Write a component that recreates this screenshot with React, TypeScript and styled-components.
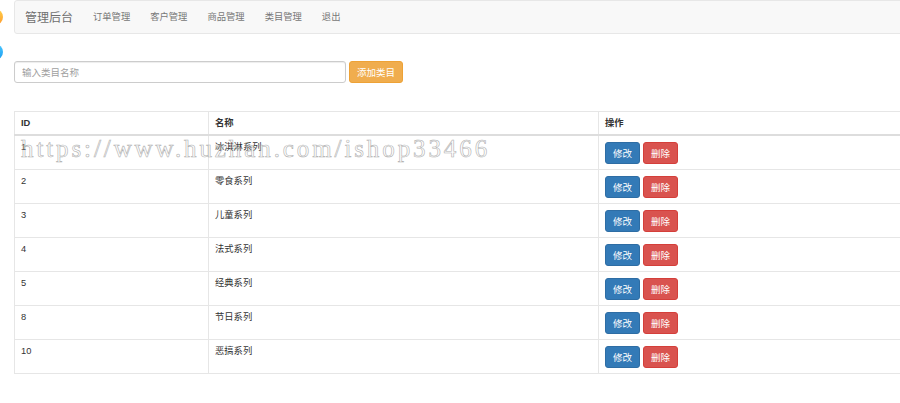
import React from "react";
import styled, { createGlobalStyle } from "styled-components";

const GlobalStyle = createGlobalStyle`
  html, body {
    margin: 0;
    padding: 0;
    background: #fff;
    overflow: hidden;
  }
  body {
    font-family: "Liberation Sans", "Noto Sans CJK SC", sans-serif;
    font-size: 9.3px;
    line-height: 1.42857;
    color: #333;
  }
`;

const categories = [
  { id: 1, name: "冰淇淋系列" },
  { id: 2, name: "零食系列" },
  { id: 3, name: "儿童系列" },
  { id: 4, name: "法式系列" },
  { id: 5, name: "经典系列" },
  { id: 8, name: "节日系列" },
  { id: 10, name: "恶搞系列" },
];

const links = ["订单管理", "客户管理", "商品管理", "类目管理", "退出"];

function App() {
  return (
    <Page>
      <GlobalStyle />
      <SideDot color="linear-gradient(#ffd24a, #ff9a2e)" top={9} />
      <SideDot color="linear-gradient(#4cc8ff, #1a9cf0)" top={44} />
      <Container>
        <Navbar>
          <Brand>管理后台</Brand>
          {links.map((l) => (
            <NavLink key={l}>{l}</NavLink>
          ))}
        </Navbar>

        <AddForm>
          <NameInput placeholder="输入类目名称" />
          <Button variant="warning">添加类目</Button>
        </AddForm>

        <Table>
          <colgroup>
            <col style={{ width: 194 }} />
            <col style={{ width: 390 }} />
            <col />
          </colgroup>
          <thead>
            <tr>
              <Th>ID</Th>
              <Th>名称</Th>
              <Th>操作</Th>
            </tr>
          </thead>
          <tbody>
            {categories.map((c) => (
              <tr key={c.id}>
                <Td>{c.id}</Td>
                <Td>{c.name}</Td>
                <Td>
                  <Actions>
                    <Button variant="primary">修改</Button>
                    <Button variant="danger">删除</Button>
                  </Actions>
                </Td>
              </tr>
            ))}
          </tbody>
        </Table>
      </Container>
      <Watermark>https://www.huzhan.com/ishop33466</Watermark>
    </Page>
  );
}

const Page = styled.div`
  position: relative;
  width: 900px;
  height: 403px;
  overflow: hidden;
`;

const SideDot = styled.div<{ color: string; top: number }>`
  position: absolute;
  left: -13px;
  top: ${(p) => p.top}px;
  width: 16px;
  height: 16px;
  border-radius: 50%;
  background: ${(p) => p.color};
`;

const Container = styled.div`
  width: 960px;
  padding-left: 14px;
  display: flex;
  flex-direction: column;
`;

const Navbar = styled.nav`
  display: flex;
  align-items: center;
  height: 34px;
  background: #f8f8f8;
  border: 1px solid #e7e7e7;
  border-radius: 3px;
  box-sizing: border-box;
`;

const Brand = styled.a`
  padding: 0 10px;
  font-size: 12px;
  color: #6f6f6f;
  font-family: "Noto Sans CJK SC", sans-serif;
`;

const NavLink = styled.a`
  padding: 0 10px;
  font-size: 9.3px;
  color: #777;
  font-family: "Noto Sans CJK SC", sans-serif;
`;

const AddForm = styled.div`
  display: flex;
  align-items: center;
  gap: 3px;
  margin-top: 27px;
`;

const NameInput = styled.input`
  width: 332px;
  height: 22px;
  box-sizing: border-box;
  border: 1px solid #ccc;
  border-radius: 3px;
  padding: 0 7px;
  font-size: 9.5px;
  font-family: "Noto Sans CJK SC", sans-serif;
  box-shadow: inset 0 1px 1px rgba(0, 0, 0, 0.075);
  outline: none;
  &::placeholder {
    color: #a0a0a0;
  }
`;

const colors = {
  primary: { bg: "#337ab7", border: "#2e6da4" },
  danger: { bg: "#d9534f", border: "#d43f3a" },
  warning: { bg: "#f0ad4e", border: "#eea236" },
};

const Button = styled.button<{ variant: keyof typeof colors }>`
  height: 22px;
  box-sizing: border-box;
  padding: 0 7px;
  border: 1px solid ${(p) => colors[p.variant].border};
  background: ${(p) => colors[p.variant].bg};
  color: #fff;
  border-radius: 3px;
  font-size: 9.5px;
  font-family: "Noto Sans CJK SC", sans-serif;
  line-height: 20px;
  cursor: pointer;
`;

const Table = styled.table`
  margin-top: 28px;
  width: 100%;
  table-layout: fixed;
  border-collapse: collapse;
  border-spacing: 0;
  border: 1px solid #e6e6e6;
`;

const Th = styled.th`
  text-align: left;
  font-weight: bold;
  padding: 5px 6px 4px 6px;
  height: 13px;
  line-height: 13px;
  border: 1px solid #e6e6e6;
  border-bottom: 2px solid #dddddd;
  font-family: "Liberation Sans", "Noto Sans CJK SC", sans-serif;
  color: #333;
`;

const Td = styled.td`
  vertical-align: top;
  padding: 5px 6px 5px 6px;
  height: 23px;
  line-height: 13px;
  border: 1px solid #e6e6e6;
  border-top: 1px solid #dddddd;
  font-family: "Liberation Sans", "Noto Sans CJK SC", sans-serif;
`;

const Actions = styled.div`
  display: flex;
  gap: 3px;
  padding-top: 1px;
`;

const Watermark = styled.div`
  position: absolute;
  left: 21px;
  top: 134px;
  font-family: "Liberation Serif", serif;
  font-size: 25px;
  letter-spacing: 2.9px;
  line-height: 30px;
  color: transparent;
  -webkit-text-stroke: 0.6px #b0b0b0;
  white-space: nowrap;
  pointer-events: none;
`;

export default App;
